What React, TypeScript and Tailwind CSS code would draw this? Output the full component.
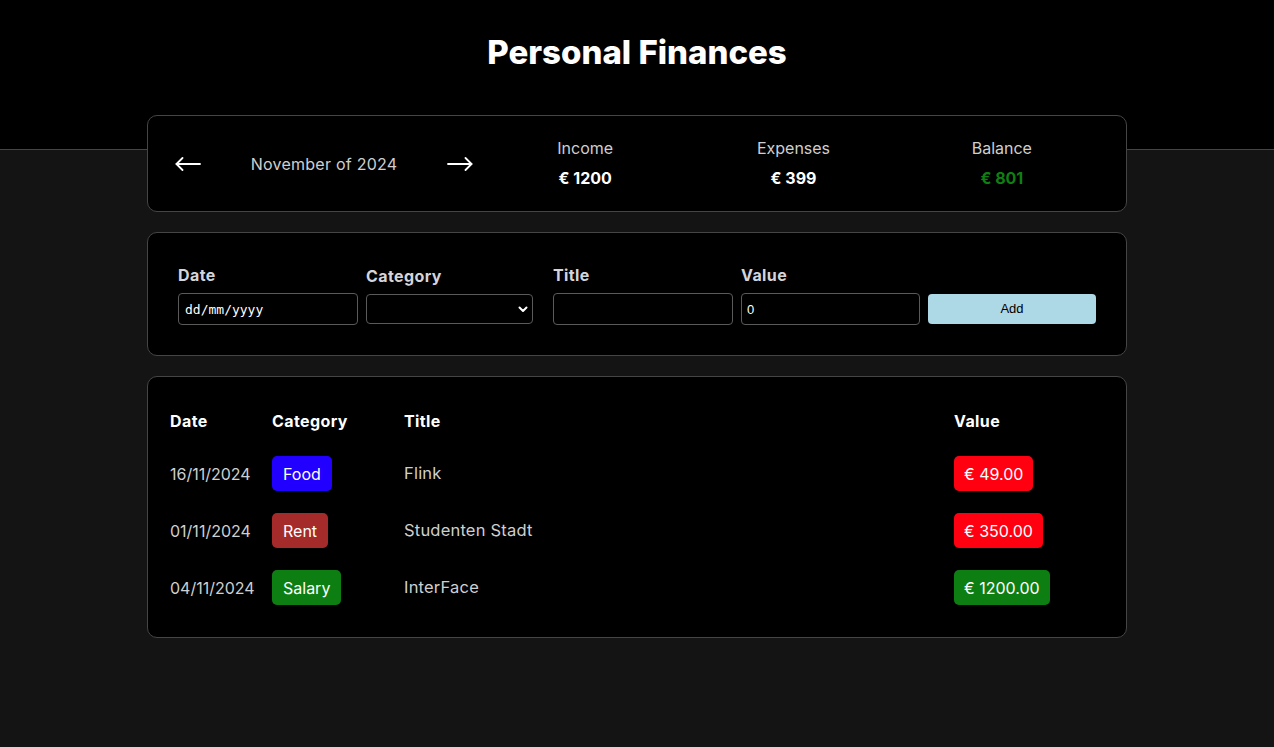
import React from "react";

type Row = {
  date: string;
  category: string;
  catColor: string;
  title: string;
  value: string;
  valColor: string;
};

const rows: Row[] = [
  { date: "16/11/2024", category: "Food", catColor: "bg-[#2200ff]", title: "Flink", value: "€ 49.00", valColor: "bg-[#ff0010]" },
  { date: "01/11/2024", category: "Rent", catColor: "bg-[#a52a2a]", title: "Studenten Stadt", value: "€ 350.00", valColor: "bg-[#ff0010]" },
  { date: "04/11/2024", category: "Salary", catColor: "bg-[#0d7f12]", title: "InterFace", value: "€ 1200.00", valColor: "bg-[#0d7f12]" },
];

function Arrow({ dir }: { dir: "left" | "right" }) {
  return (
    <svg width="26" height="14" viewBox="0 0 26 14" fill="none" stroke="#fff" strokeWidth="1.8" strokeLinecap="round" strokeLinejoin="round">
      {dir === "left" ? (
        <>
          <line x1="1.5" y1="7" x2="25" y2="7" />
          <polyline points="7.5,1 1.5,7 7.5,13" />
        </>
      ) : (
        <>
          <line x1="1" y1="7" x2="24.5" y2="7" />
          <polyline points="18.5,1 24.5,7 18.5,13" />
        </>
      )}
    </svg>
  );
}

function Stat({ label, value, color }: { label: string; value: string; color: string }) {
  return (
    <div className="flex flex-col items-center">
      <div className="text-[16px] leading-[24px] text-[#cfcfcf]">{label}</div>
      <div className={`mt-[6px] text-[16px] font-bold leading-[24px] ${color}`}>{value}</div>
    </div>
  );
}

const labelCls = "mb-[7px] block text-[16px] font-bold leading-[22px] tracking-[0.4px] text-[#d4d4dc]";

export default function App() {
  const font = { fontFamily: "Inter, 'Noto Sans', sans-serif" };
  return (
    <div className="min-h-[747px] bg-[#141414]" style={font}>
      <header className="h-[150px] border-b border-[#454545] bg-black pt-[30px] text-center">
        <h1 className="text-[33px] font-extrabold leading-[44px] text-white">Personal Finances</h1>
      </header>

      <main className="mx-auto -mt-[35px] w-[980px] space-y-[20px]">
        <section className="flex h-[97px] items-center rounded-[10px] border border-[#454545] bg-black pl-[27px] pr-[20px]">
          <div className="flex w-[298px] items-center justify-between">
            <Arrow dir="left" />
            <span className="text-[16px] tracking-[0.25px] text-[#cfcfcf]">November of 2024</span>
            <Arrow dir="right" />
          </div>
          <div className="-mt-[2px] ml-[8px] grid flex-1 grid-cols-3">
            <Stat label="Income" value="€ 1200" color="text-white" />
            <Stat label="Expenses" value="€ 399" color="text-white" />
            <Stat label="Balance" value="€ 801" color="text-[#0f7f12]" />
          </div>
        </section>

        <section className="rounded-[10px] border border-[#454545] bg-black pb-[30px] pl-[30px] pt-[31px]">
          <div className="grid grid-cols-[188px_187px_188px_187px_168px] items-end">
            <div>
              <label className={labelCls}>Date</label>
              <input
                readOnly
                value="dd/mm/yyyy"
                className="block h-[32px] w-[180px] rounded-[4px] border border-[#5a5a5a] bg-black px-[6px] text-[13px] text-white outline-none"
                style={{ fontFamily: "'DejaVu Sans Mono', monospace" }}
              />
            </div>
            <div>
              <label className={labelCls}>Category</label>
              <div className="mb-[1px] flex h-[30px] w-[167px] items-center justify-end rounded-[4px] border border-[#5a5a5a] bg-black pr-[4px]">
                <svg width="10" height="7" viewBox="0 0 10 7" fill="none" stroke="#fff" strokeWidth="2" strokeLinecap="round" strokeLinejoin="round">
                  <polyline points="1.5,1.5 5,5 8.5,1.5" />
                </svg>
              </div>
            </div>
            <div>
              <label className={labelCls}>Title</label>
              <input className="block h-[32px] w-[180px] rounded-[4px] border border-[#5a5a5a] bg-black px-[6px] text-[13px] text-white outline-none" />
            </div>
            <div>
              <label className={labelCls}>Value</label>
              <input
                readOnly
                value="0"
                className="block h-[32px] w-[179px] rounded-[4px] border border-[#5a5a5a] bg-black px-[5px] text-[13px] text-white outline-none"
                style={{ fontFamily: "'Liberation Sans', Arial, sans-serif" }}
              />
            </div>
            <button
              className="mb-[1px] h-[30px] w-[168px] rounded-[4px] bg-[#add8e6] text-[13px] text-black"
              style={{ fontFamily: "'Liberation Sans', Arial, sans-serif" }}
            >
              Add
            </button>
          </div>
        </section>

        <section className="rounded-[10px] border border-[#454545] bg-black pb-[21px] pl-[22px] pr-[21px] pt-[21px]">
          <div className="grid h-[47px] grid-cols-[102px_132px_550px_1fr] items-center pb-[1px] text-[16px] font-bold tracking-[0.4px] text-white">
            <span>Date</span>
            <span>Category</span>
            <span>Title</span>
            <span>Value</span>
          </div>
          {rows.map((r) => (
            <div key={r.date} className="grid h-[57px] grid-cols-[102px_132px_550px_1fr] items-center text-[16px] text-[#cfcfcf]">
              <span>{r.date}</span>
              <span>
                <span className={`inline-flex h-[35px] items-center rounded-[5px] px-[11px] text-white ${r.catColor}`}>{r.category}</span>
              </span>
              <span className="text-[16.5px] tracking-[0.2px]">{r.title}</span>
              <span>
                <span className={`inline-flex h-[35px] items-center rounded-[5px] px-[10px] text-white ${r.valColor}`}>{r.value}</span>
              </span>
            </div>
          ))}
        </section>
      </main>
    </div>
  );
}
